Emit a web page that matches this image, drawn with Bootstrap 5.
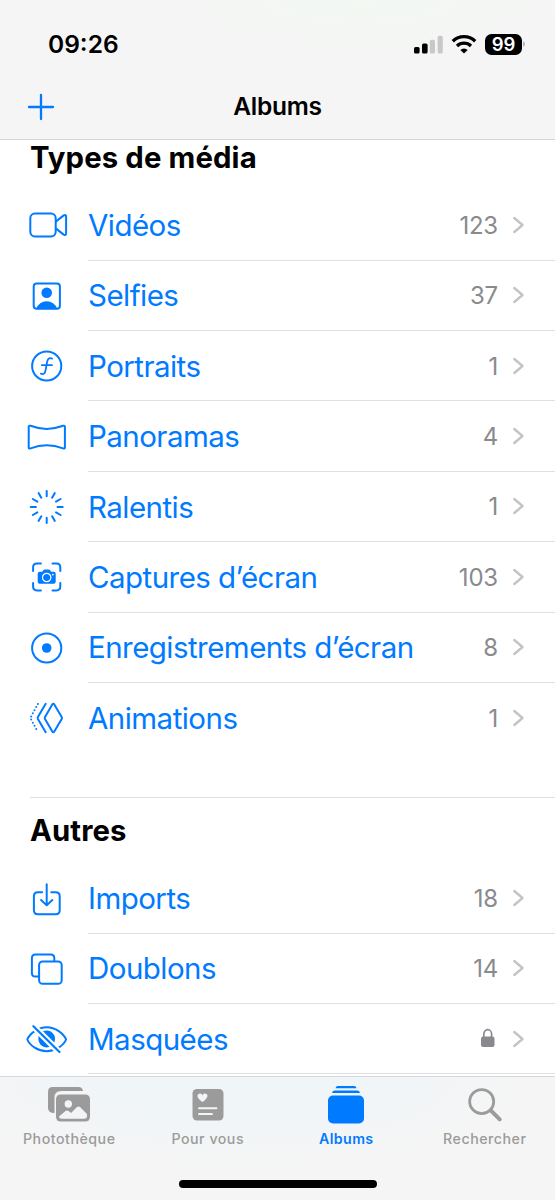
<!DOCTYPE html>
<html lang="fr">
<head>
<meta charset="utf-8">
<meta name="viewport" content="width=device-width, initial-scale=1">
<title>Albums</title>
<link href="https://cdn.jsdelivr.net/npm/bootstrap@5.3.0/dist/css/bootstrap.min.css" rel="stylesheet">
<style>
:root{--ios-blue:#007aff;--hair:#e0e0e2}
body{font-family:Inter,"Liberation Sans",sans-serif;color:#000;background:#fff;height:1200px;overflow:hidden}
svg{display:block;overflow:visible}
.top-bar{height:140px;background:radial-gradient(ellipse 230px 60px at 65% 0,#f3f8f3,#f5f5f5);border-bottom:1px solid #d4d4d5}
.status-row{height:78px;padding:10px 30px 0 48px}
.clock{font-size:24.5px;font-weight:600;letter-spacing:0}
.title-row{height:57px;padding:0 27.5px}
.title-row h1{font-size:24.5px;font-weight:600;letter-spacing:-.25px;width:200px;line-height:1}
.side-col{width:150px}
.battery{width:37px;height:21px;border-radius:6.5px;background:#000;color:#fff;font-size:18.5px;font-weight:600;line-height:21px;letter-spacing:0;margin-left:8px}
.sect-title{font-size:29.3px;font-weight:700;line-height:36px;letter-spacing:.12px;padding-left:30px}
.sect-title.ruled{padding-top:15px}
.sect-gap{height:14.3px}
.sect-media{height:657px}
.sect-other{height:279px}
.sect-rule{margin-left:30px;height:1px;background:var(--hair)}
.album-row{height:70.375px;padding-left:25px;color:var(--ios-blue)}
.album-row>svg{width:44px;height:44px;flex:none;margin-right:19px}
.row-body{border-bottom:1px solid var(--hair);padding-right:31px}
.list-end .row-body{border-color:transparent}
.album-name{font-size:29.5px;letter-spacing:-.54px;line-height:1;white-space:nowrap;padding-top:1.6px}
.album-count{font-size:24px;letter-spacing:-.2px;color:#8a8a8e;line-height:1;padding-top:2px}
.lock{margin-right:3px}
.chev{margin-left:15px}
.cv{fill:none;stroke:#c4c4c7;stroke-width:2.4;stroke-linecap:round;stroke-linejoin:round}
.ln{fill:none;stroke:currentColor;stroke-width:2;stroke-linecap:round;stroke-linejoin:round}
.fl{fill:currentColor}
.tab-bar{height:124px;background:radial-gradient(ellipse 300px 90px at 42% 0,#f0f5f8 40%,#f5f5f5);border-top:1px solid #d6d9db}
.tab-link{width:138.5px;color:#9b9b9b;font-size:14.2px;font-weight:500;letter-spacing:.52px;line-height:18px}
.tab-link.active{color:var(--ios-blue);font-weight:600;letter-spacing:.4px}
.tab-link svg{width:44px;height:44px;margin:7px 0 2px}
.home-pill{width:198px;height:8px;border-radius:4px;background:#000;margin-top:32px}
</style>
</head>
<body>
<div class="d-flex flex-column h-100">
<header class="top-bar flex-shrink-0">
  <div class="status-row d-flex align-items-center justify-content-between">
    <span class="clock">09:26</span>
    <div class="d-flex align-items-center">
      <svg width="29" height="19" viewBox="0 0 29 19"><rect y="12" width="5.6" height="6.6" rx="1.6"/><rect x="8" y="8.6" width="5.6" height="10" rx="1.6"/><g fill="#c8c8c8"><rect x="15.8" y="4.8" width="5.2" height="13.8" rx="1.6"/><rect x="23.6" y=".8" width="5.2" height="17.8" rx="1.6"/></g></svg>
      <svg class="ms-2" width="26" height="19" viewBox="0 0 26 19"><g fill="none" stroke="#000" stroke-width="3.3"><path d="M1.8 6.2a16 16 0 0 1 22.4 0"/><path d="M6 11a10 10 0 0 1 14 0"/></g><path d="M13 18.6 9.3 15a5.3 5.3 0 0 1 7.4 0z"/></svg>
      <div class="battery text-center">99</div>
      <svg width="3" height="8" viewBox="0 0 3 8"><path d="M1 1.2q2 .6 2 2.8t-2 2.8z" fill="#b5b5b5"/></svg>
    </div>
  </div>
  <div class="title-row d-flex align-items-center justify-content-between">
    <div class="side-col"><svg width="26" height="26" viewBox="0 0 26 26" fill="none" stroke="#007aff" stroke-width="2.3" stroke-linecap="round"><path d="M13 1v24M1 13h24"/></svg></div>
    <h1 class="mb-0 text-center">Albums</h1>
    <div class="side-col"></div>
  </div>
</header>

<main class="flex-shrink-0">
  <section class="sect-media">
    <h2 class="sect-title mb-0">Types de média</h2>
    <div class="sect-gap"></div>
    <div class="album-row d-flex align-items-center"><svg viewBox="-21.7 -22 44 44"><g class="ln"><rect x="-16.4" y="-11.4" width="25.4" height="22.8" rx="4.6"/><path d="M9.4-3.6 17-9.6q2.4-1.2 2.4 1V8.6q0 2.2-2.4 1L9.4 3.6"/></g></svg><div class="row-body d-flex align-items-center flex-grow-1 h-100"><span class="album-name me-auto">Vidéos</span><span class="album-count">123</span><svg class="chev" width="11" height="18" viewBox="0 0 11 18"><path d="M1.3 2 9.5 9 1.3 16" class="cv"/></svg></div></div>
    <div class="album-row d-flex align-items-center"><svg viewBox="-21.7 -22 44 44"><rect class="ln" x="-13" y="-12.6" width="26.2" height="25.4" rx="3"/><circle class="fl" cy="-3.2" r="5.3"/><path class="fl" d="M-10.5 12.8Q-7.5 5.2 0 5.2t10.5 7.6z"/></svg><div class="row-body d-flex align-items-center flex-grow-1 h-100"><span class="album-name me-auto">Selfies</span><span class="album-count">37</span><svg class="chev" width="11" height="18" viewBox="0 0 11 18"><path d="M1.3 2 9.5 9 1.3 16" class="cv"/></svg></div></div>
    <div class="album-row d-flex align-items-center"><svg viewBox="-21.7 -22 44 44"><g class="ln"><circle r="14.6"/><path d="M5.4-7.4C2-8.8.8-6.5.2-3.2L-1.1 4.2C-1.7 7.6-3 8.8-5.8 7.7M-4.8-.8H5.3" style="stroke-width:1.8"/></g></svg><div class="row-body d-flex align-items-center flex-grow-1 h-100"><span class="album-name me-auto">Portraits</span><span class="album-count">1</span><svg class="chev" width="11" height="18" viewBox="0 0 11 18"><path d="M1.3 2 9.5 9 1.3 16" class="cv"/></svg></div></div>
    <div class="album-row d-flex align-items-center"><svg viewBox="-21.7 -22 44 44"><path class="ln" d="M-18-10.2q0-1.6 1.8-1Q0-5 16.4-11.2q1.8-.6 1.8 1v20.6q0 1.6-1.8 1Q0 5.2-16.2 11.4q-1.8.6-1.8-1z"/></svg><div class="row-body d-flex align-items-center flex-grow-1 h-100"><span class="album-name me-auto">Panoramas</span><span class="album-count">4</span><svg class="chev" width="11" height="18" viewBox="0 0 11 18"><path d="M1.3 2 9.5 9 1.3 16" class="cv"/></svg></div></div>
    <div class="album-row d-flex align-items-center"><svg viewBox="-21.7 -22 44 44"><g class="ln"><path id="tk" d="M0-16v5.2M0 16v-5.2M-16 0h5.2M16 0h-5.2"/><use href="#tk" transform="rotate(30)"/><use href="#tk" transform="rotate(60)"/></g></svg><div class="row-body d-flex align-items-center flex-grow-1 h-100"><span class="album-name me-auto">Ralentis</span><span class="album-count">1</span><svg class="chev" width="11" height="18" viewBox="0 0 11 18"><path d="M1.3 2 9.5 9 1.3 16" class="cv"/></svg></div></div>
    <div class="album-row d-flex align-items-center"><svg viewBox="-21.7 -22 44 44"><path class="ln" d="M-13.6-6v-3.6q0-3.8 3.8-3.8h4M5.8-13.4h4q3.8 0 3.8 3.8V-6M13.6 6v3.6q0 3.8-3.8 3.8h-4M-5.8 13.4h-4q-3.8 0-3.8-3.8V6"/><path class="fl" d="M-9-3.2q0-2 2-2h2.6l1-1.5q.5-.7 1.3-.7h4.2q.8 0 1.3.7l1 1.5H7q2 0 2 2v8q0 2-2 2H-7q-2 0-2-2z"/><circle r="4.2" cy=".5" fill="none" stroke="#fff" stroke-width="1.2"/><circle r=".9" cx="6.2" cy="-2.4" fill="#fff"/></svg><div class="row-body d-flex align-items-center flex-grow-1 h-100"><span class="album-name me-auto">Captures d’écran</span><span class="album-count">103</span><svg class="chev" width="11" height="18" viewBox="0 0 11 18"><path d="M1.3 2 9.5 9 1.3 16" class="cv"/></svg></div></div>
    <div class="album-row d-flex align-items-center"><svg viewBox="-21.7 -22 44 44"><circle class="ln" r="14.6"/><circle class="fl" r="4.8"/></svg><div class="row-body d-flex align-items-center flex-grow-1 h-100"><span class="album-name me-auto">Enregistrements d’écran</span><span class="album-count">8</span><svg class="chev" width="11" height="18" viewBox="0 0 11 18"><path d="M1.3 2 9.5 9 1.3 16" class="cv"/></svg></div></div>
    <div class="album-row list-end d-flex align-items-center"><svg viewBox="-21.7 -22 44 44"><g class="ln"><path d="M5.6-13.6q1-1.2 2 0L15-1q.5 1 0 2L7.6 13.6q-1 1.2-2 0L-1.7 1q-.5-1 0-2zM-1-14.2-8.8-1q-.5 1 0 2L-1 14.2"/><path d="M-8.8-14-16.4 0-8.8 14" stroke-dasharray="0 3.55"/></g></svg><div class="row-body d-flex align-items-center flex-grow-1 h-100"><span class="album-name me-auto">Animations</span><span class="album-count">1</span><svg class="chev" width="11" height="18" viewBox="0 0 11 18"><path d="M1.3 2 9.5 9 1.3 16" class="cv"/></svg></div></div>
  </section>
  <section class="sect-other">
    <div class="sect-rule"></div>
    <h2 class="sect-title ruled mb-0">Autres</h2>
    <div class="sect-gap"></div>
    <div class="album-row d-flex align-items-center"><svg viewBox="-21.7 -22 44 44"><g class="ln"><path d="M-4.6-5.8h-4.2q-4 0-4 4v14q0 4 4 4H9q4 0 4-4v-14q0-4-4-4H4.6"/><path d="M0-13.8V7M-5.6 2 0 7.4 5.6 2"/></g></svg><div class="row-body d-flex align-items-center flex-grow-1 h-100"><span class="album-name me-auto">Imports</span><span class="album-count">18</span><svg class="chev" width="11" height="18" viewBox="0 0 11 18"><path d="M1.3 2 9.5 9 1.3 16" class="cv"/></svg></div></div>
    <div class="album-row d-flex align-items-center"><svg viewBox="-21.7 -22 44 44"><g class="ln"><path d="M-8 7.6h-3.2q-3.6 0-3.6-3.6v-14.8q0-3.6 3.6-3.6H4q3.6 0 3.6 3.6v2.6"/><rect x="-7.6" y="-7.6" width="22.6" height="22.4" rx="3.6"/></g></svg><div class="row-body d-flex align-items-center flex-grow-1 h-100"><span class="album-name me-auto">Doublons</span><span class="album-count">14</span><svg class="chev" width="11" height="18" viewBox="0 0 11 18"><path d="M1.3 2 9.5 9 1.3 16" class="cv"/></svg></div></div>
    <div class="album-row d-flex align-items-center"><svg viewBox="-21.7 -22 44 44"><path class="ln" d="M-19.4.5C-17-5.5-8.5-11.8 0-11.8S17-5.5 19.4.5C17 6.5 8.5 12.3 0 12.3S-17 6.5-19.4.5z"/><circle class="fl" r="8.4"/><path d="M-15-14.5 12 12.5" stroke="#fff" stroke-width="6.5"/><path class="ln" d="M-13.3-12.8 12.8 13" style="stroke-width:2.2"/></svg><div class="row-body d-flex align-items-center flex-grow-1 h-100"><span class="album-name me-auto">Masquées</span><svg class="lock" width="14" height="19" viewBox="0 0 14 19"><rect y="7.500" width="13.5" height="10.5" rx="2" fill="#8a8a8e"/><path d="M2.800 8V5a3.900 4.300 0 0 1 7.800 0v3" fill="none" stroke="#8a8a8e" stroke-width="1.7"/></svg><svg class="chev" width="11" height="18" viewBox="0 0 11 18"><path d="M1.3 2 9.5 9 1.3 16" class="cv"/></svg></div></div>
  </section>
</main>
<footer class="tab-bar flex-shrink-0">
  <nav class="d-flex">
    <div class="tab-link d-flex flex-column align-items-center"><svg viewBox="0 0 44 44"><path fill="currentColor" d="M5.5 3h26q4 0 4.5 4H14q-6.500 0-6.500 6.500V29Q1 29 1 24V8q0-5 4.500-5z"/><rect x="9" y="10.5" width="34" height="27" rx="4.5" fill="currentColor"/><circle cx="21.3" cy="20" r="3.7" fill="#f2f5f7"/><path d="M12 32.500 18.500 27q1.500-1 3 0l2.500 2 6-6q1.500-1.200 3 0l7 7v2q0 2.700-2.700 2.700H14.500Q12 34.700 12 32.500z" fill="#f2f5f7"/></svg>Photothèque</div>
    <div class="tab-link d-flex flex-column align-items-center"><svg viewBox="0 0 44 44"><rect x="6.5" y="5" width="31" height="31.5" rx="4.5" fill="currentColor"/><path d="M16.500 18C9 13 11.500 9.500 14 9.500q2 0 2.500 1.700.5-1.700 2.500-1.700c2.500 0 5 3.500-2.500 8.500z" fill="#f2f5f7"/><path d="M13 24.300h17.500M13 30h13" stroke="#f2f5f7" stroke-width="1.9" stroke-linecap="round"/></svg>Pour vous</div>
    <div class="tab-link active d-flex flex-column align-items-center"><svg viewBox="0 0 44 44" fill="currentColor"><path d="M11.500 4.200q.4-2.200 2.500-2.200h16q2.100 0 2.500 2.200zM8 8.900q.5-2.400 3-2.400h22q2.500 0 3 2.400z"/><rect x="4" y="11.5" width="36" height="28" rx="5"/></svg>Albums</div>
    <div class="tab-link d-flex flex-column align-items-center"><svg viewBox="0.8 -0.3 44 44" fill="none" stroke="currentColor"><circle cx="19.5" cy="17.3" r="12" stroke-width="2.8"/><path d="m28.500 26 9 9" stroke-width="4" stroke-linecap="round"/></svg>Rechercher</div>
  </nav>
  <div class="home-pill mx-auto"></div>
</footer>
</div>
<script src="https://cdn.jsdelivr.net/npm/bootstrap@5.3.0/dist/js/bootstrap.bundle.min.js"></script>
</body>
</html>
